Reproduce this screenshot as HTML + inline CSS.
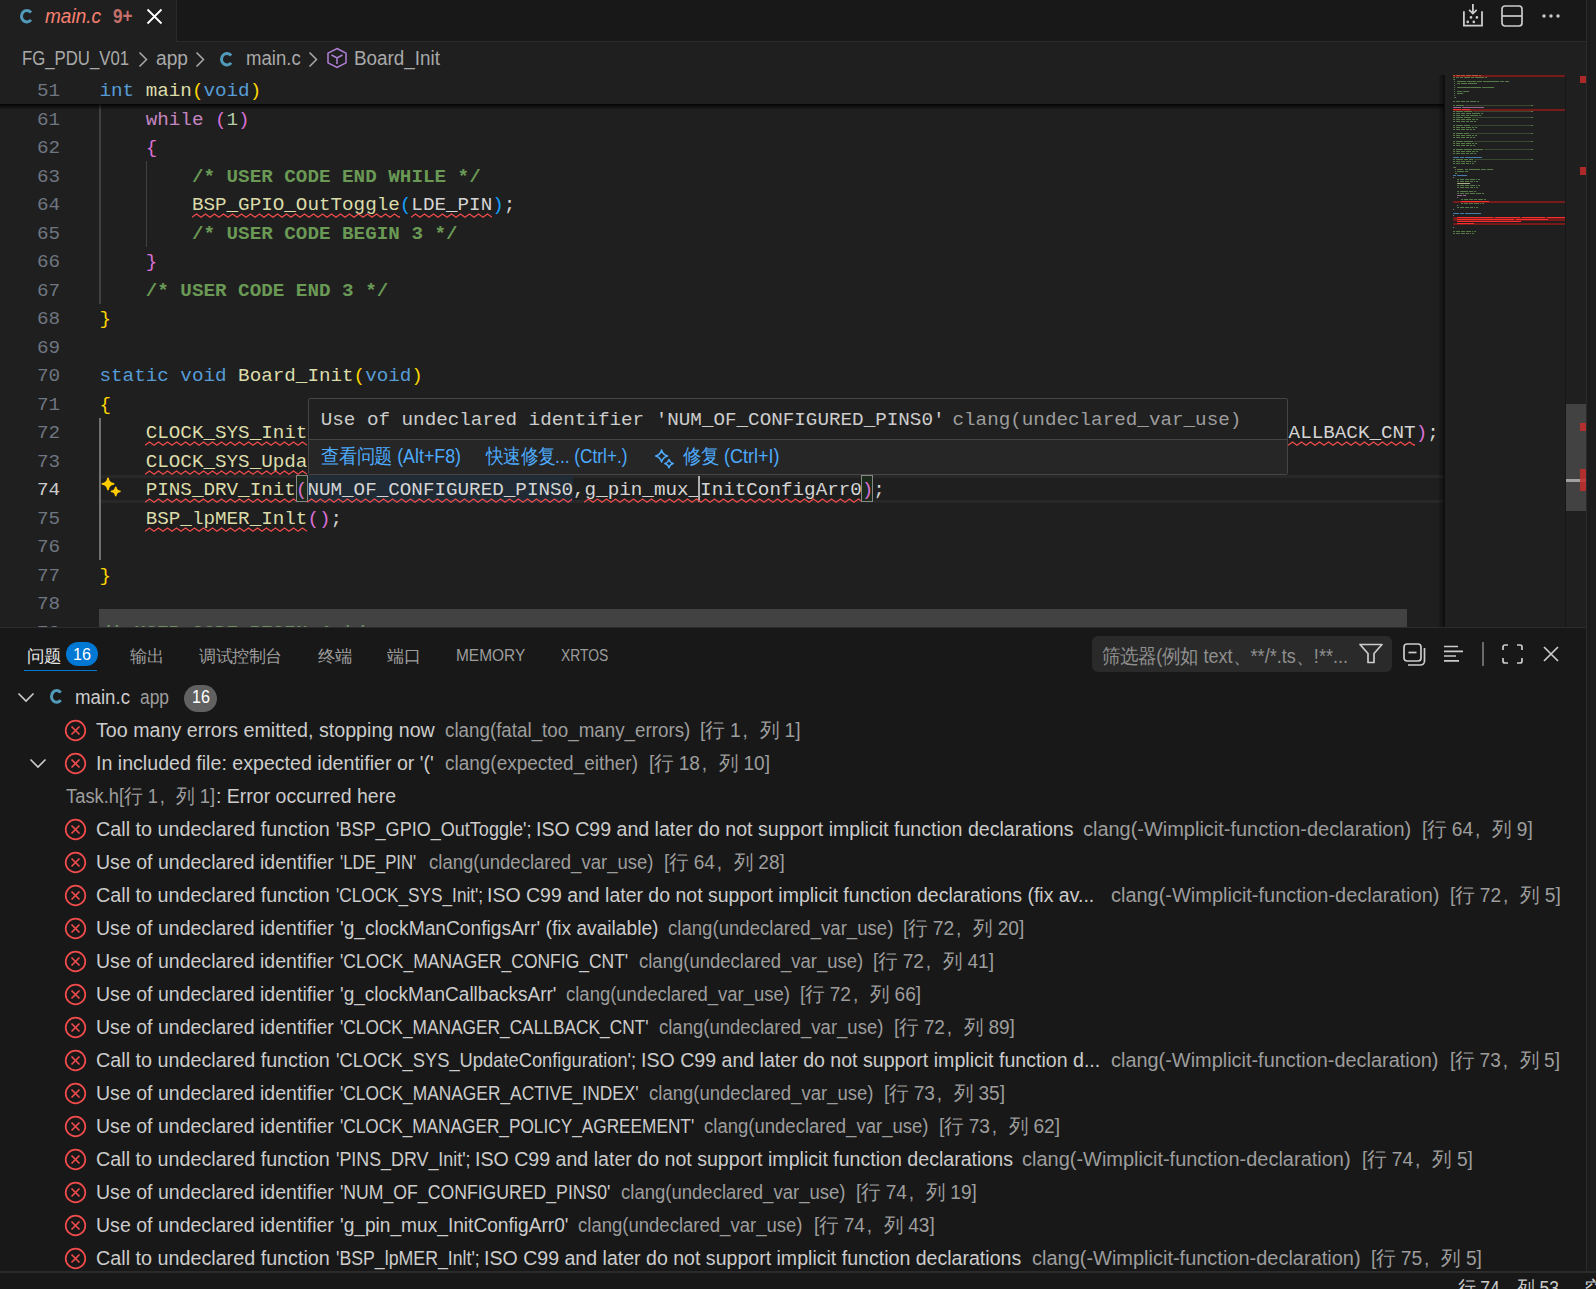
<!DOCTYPE html><html><head><meta charset="utf-8"><style>
*{margin:0;padding:0}
html,body{width:1596px;height:1289px;overflow:hidden;background:#1f1f1f}
.t{position:absolute;white-space:pre;transform-origin:0 50%;}
.b{position:absolute;}
.cj{display:inline-block;width:1em;text-align:center;font-style:normal;}
.cm{text-align:left;padding-left:0.1em;box-sizing:border-box;}
</style></head><body>
<div class="b" style="left:0px;top:0px;width:1586px;height:41px;background:#181818;"></div>
<div class="b" style="left:0px;top:41px;width:1586px;height:1px;background:#2b2b2b;"></div>
<div class="b" style="left:0px;top:0px;width:176px;height:42px;background:#1f1f1f;"></div>
<div class="b" style="left:176px;top:0px;width:1px;height:41px;background:#2b2b2b;"></div>
<svg class="b" style="left:16.1px;top:4.5px" width="20.5" height="22.4" viewBox="16.1 4.5 20.5 22.4"><path d="M31.10 12.04A5.38 5.70 0 1 0 31.10 19.36" stroke="#519aba" stroke-width="3.0" fill="none" stroke-linecap="butt"/></svg>
<span id="f1" class="t" style="left:45.00px;top:3.57px;font-family:'Liberation Sans', sans-serif;font-size:19.5px;line-height:25.35px;color:#f88070;font-style:italic;transform:scaleX(0.9750);">main.c</span>
<span id="f2" class="t" style="left:112.50px;top:3.57px;font-family:'Liberation Sans', sans-serif;font-size:19.5px;line-height:25.35px;color:#c5706a;font-weight:bold;transform:scaleX(0.8770);">9+</span>
<svg class="b" style="left:146px;top:8px" width="17" height="17" viewBox="0 0 17 17"><path d="M1.5 1.5L15.5 15.5M15.5 1.5L1.5 15.5" stroke="#ffffff" stroke-width="1.8" fill="none"/></svg>
<svg class="b" style="left:0;top:0" width="1596" height="40" viewBox="0 0 1596 40" fill="none" stroke="#cccccc" stroke-width="1.8">
<path d="M1463.9 11.3V25.6H1482V11.3"/><path d="M1472.9 4V13.6M1469.1 9.9L1472.9 13.6L1476.7 9.9"/>
<g fill="#cccccc" stroke="none"><circle cx="1471" cy="17.4" r="1.3"/><circle cx="1476.9" cy="17.4" r="1.3"/><circle cx="1467.7" cy="21.9" r="1.3"/><circle cx="1473.8" cy="21.9" r="1.3"/></g></svg>
<svg class="b" style="left:1500px;top:4px" width="24" height="24" viewBox="0 0 24 24" fill="none" stroke="#cccccc" stroke-width="1.7">
<rect x="2" y="2" width="20" height="20" rx="3"/><path d="M2 12h20"/></svg>
<svg class="b" style="left:1540px;top:9px" width="22" height="14" viewBox="0 0 22 14" fill="#cccccc">
<circle cx="4" cy="7" r="1.7"/><circle cx="11" cy="7" r="1.7"/><circle cx="18" cy="7" r="1.7"/></svg>
<span id="f3" class="t" style="left:22.00px;top:46.27px;font-family:'Liberation Sans', sans-serif;font-size:19.5px;line-height:25.35px;color:#a9a9a9;transform:scaleX(0.8585);">FG_PDU_V01</span>
<svg class="b" style="left:138px;top:51px" width="10" height="17" viewBox="0 0 10 17"><path d="M1.5 1.5L8.5 8.5L1.5 15.5" stroke="#a9a9a9" stroke-width="1.5" fill="none"/></svg>
<span id="f4" class="t" style="left:156.00px;top:46.27px;font-family:'Liberation Sans', sans-serif;font-size:19.5px;line-height:25.35px;color:#a9a9a9;transform:scaleX(0.9832);">app</span>
<svg class="b" style="left:195px;top:51px" width="10" height="17" viewBox="0 0 10 17"><path d="M1.5 1.5L8.5 8.5L1.5 15.5" stroke="#a9a9a9" stroke-width="1.5" fill="none"/></svg>
<svg class="b" style="left:215.9px;top:47.7px" width="20.69999999999999" height="22.39999999999999" viewBox="215.9 47.7 20.69999999999999 22.39999999999999"><path d="M231.10 55.24A5.49 5.70 0 1 0 231.10 62.56" stroke="#519aba" stroke-width="3.0" fill="none" stroke-linecap="butt"/></svg>
<span id="f5" class="t" style="left:246.00px;top:46.27px;font-family:'Liberation Sans', sans-serif;font-size:19.5px;line-height:25.35px;color:#a9a9a9;transform:scaleX(0.9523);">main.c</span>
<svg class="b" style="left:308px;top:51px" width="10" height="17" viewBox="0 0 10 17"><path d="M1.5 1.5L8.5 8.5L1.5 15.5" stroke="#a9a9a9" stroke-width="1.5" fill="none"/></svg>
<svg class="b" style="left:326px;top:47px" width="22" height="22" viewBox="0 0 22 22" fill="none" stroke="#b180d7" stroke-width="1.5">
<path d="M11 1.5L20 6.2V15.8L11 20.5L2 15.8V6.2Z"/><path d="M5.5 8L11 11L16.5 8M11 11V17"/></svg>
<span id="f6" class="t" style="left:354.40px;top:46.27px;font-family:'Liberation Sans', sans-serif;font-size:19.5px;line-height:25.35px;color:#a9a9a9;transform:scaleX(0.9673);">Board_Init</span>
<div class="b" style="left:101px;top:474.95px;width:1343px;height:3px;background:#282828;"></div>
<div class="b" style="left:101px;top:500.05px;width:1343px;height:3px;background:#282828;"></div>
<div class="b" style="left:99px;top:104.25px;width:1.5px;height:199.5px;background:#404040;"></div>
<div class="b" style="left:145.5px;top:161.25px;width:1.5px;height:85.5px;background:#404040;"></div>
<div class="b" style="left:99px;top:417.75px;width:1.5px;height:142.5px;background:#707070;"></div>
<span id="f7" class="t" style="left:36.90px;top:107.61px;font-family:'Liberation Mono', monospace;font-size:19.25px;line-height:25.03px;color:#6e7681;">61</span>
<span id="f8" class="t" style="left:36.90px;top:136.11px;font-family:'Liberation Mono', monospace;font-size:19.25px;line-height:25.03px;color:#6e7681;">62</span>
<span id="f9" class="t" style="left:36.90px;top:164.61px;font-family:'Liberation Mono', monospace;font-size:19.25px;line-height:25.03px;color:#6e7681;">63</span>
<span id="f10" class="t" style="left:36.90px;top:193.11px;font-family:'Liberation Mono', monospace;font-size:19.25px;line-height:25.03px;color:#6e7681;">64</span>
<span id="f11" class="t" style="left:36.90px;top:221.61px;font-family:'Liberation Mono', monospace;font-size:19.25px;line-height:25.03px;color:#6e7681;">65</span>
<span id="f12" class="t" style="left:36.90px;top:250.11px;font-family:'Liberation Mono', monospace;font-size:19.25px;line-height:25.03px;color:#6e7681;">66</span>
<span id="f13" class="t" style="left:36.90px;top:278.61px;font-family:'Liberation Mono', monospace;font-size:19.25px;line-height:25.03px;color:#6e7681;">67</span>
<span id="f14" class="t" style="left:36.90px;top:307.11px;font-family:'Liberation Mono', monospace;font-size:19.25px;line-height:25.03px;color:#6e7681;">68</span>
<span id="f15" class="t" style="left:36.90px;top:335.61px;font-family:'Liberation Mono', monospace;font-size:19.25px;line-height:25.03px;color:#6e7681;">69</span>
<span id="f16" class="t" style="left:36.90px;top:364.11px;font-family:'Liberation Mono', monospace;font-size:19.25px;line-height:25.03px;color:#6e7681;">70</span>
<span id="f17" class="t" style="left:36.90px;top:392.61px;font-family:'Liberation Mono', monospace;font-size:19.25px;line-height:25.03px;color:#6e7681;">71</span>
<span id="f18" class="t" style="left:36.90px;top:421.11px;font-family:'Liberation Mono', monospace;font-size:19.25px;line-height:25.03px;color:#6e7681;">72</span>
<span id="f19" class="t" style="left:36.90px;top:449.61px;font-family:'Liberation Mono', monospace;font-size:19.25px;line-height:25.03px;color:#6e7681;">73</span>
<span id="f20" class="t" style="left:36.90px;top:478.11px;font-family:'Liberation Mono', monospace;font-size:19.25px;line-height:25.03px;color:#cccccc;">74</span>
<span id="f21" class="t" style="left:36.90px;top:506.61px;font-family:'Liberation Mono', monospace;font-size:19.25px;line-height:25.03px;color:#6e7681;">75</span>
<span id="f22" class="t" style="left:36.90px;top:535.11px;font-family:'Liberation Mono', monospace;font-size:19.25px;line-height:25.03px;color:#6e7681;">76</span>
<span id="f23" class="t" style="left:36.90px;top:563.61px;font-family:'Liberation Mono', monospace;font-size:19.25px;line-height:25.03px;color:#6e7681;">77</span>
<span id="f24" class="t" style="left:36.90px;top:592.11px;font-family:'Liberation Mono', monospace;font-size:19.25px;line-height:25.03px;color:#6e7681;">78</span>
<span id="f25" class="t" style="left:36.90px;top:620.61px;font-family:'Liberation Mono', monospace;font-size:19.25px;line-height:25.03px;color:#6e7681;">79</span>
<span id="f26" class="t" style="left:145.70px;top:107.61px;font-family:'Liberation Mono', monospace;font-size:19.25px;line-height:25.03px;color:#c586c0;">while</span>
<span id="f27" class="t" style="left:215.00px;top:107.61px;font-family:'Liberation Mono', monospace;font-size:19.25px;line-height:25.03px;color:#da70d6;">(</span>
<span id="f28" class="t" style="left:226.55px;top:107.61px;font-family:'Liberation Mono', monospace;font-size:19.25px;line-height:25.03px;color:#b5cea8;">1</span>
<span id="f29" class="t" style="left:238.10px;top:107.61px;font-family:'Liberation Mono', monospace;font-size:19.25px;line-height:25.03px;color:#da70d6;">)</span>
<span id="f30" class="t" style="left:145.70px;top:136.11px;font-family:'Liberation Mono', monospace;font-size:19.25px;line-height:25.03px;color:#da70d6;">{</span>
<span id="f31" class="t" style="left:191.90px;top:164.61px;font-family:'Liberation Mono', monospace;font-size:19.25px;line-height:25.03px;color:#6a9955;font-weight:bold;">/* USER CODE END WHILE */</span>
<span id="f32" class="t" style="left:191.90px;top:193.11px;font-family:'Liberation Mono', monospace;font-size:19.25px;line-height:25.03px;color:#dcdcaa;">BSP_GPIO_OutToggle</span>
<span id="f33" class="t" style="left:399.80px;top:193.11px;font-family:'Liberation Mono', monospace;font-size:19.25px;line-height:25.03px;color:#179fff;">(</span>
<span id="f34" class="t" style="left:411.35px;top:193.11px;font-family:'Liberation Mono', monospace;font-size:19.25px;line-height:25.03px;color:#d4d4d4;">LDE_PIN</span>
<span id="f35" class="t" style="left:492.20px;top:193.11px;font-family:'Liberation Mono', monospace;font-size:19.25px;line-height:25.03px;color:#179fff;">)</span>
<span id="f36" class="t" style="left:503.75px;top:193.11px;font-family:'Liberation Mono', monospace;font-size:19.25px;line-height:25.03px;color:#d4d4d4;">;</span>
<span id="f37" class="t" style="left:191.90px;top:221.61px;font-family:'Liberation Mono', monospace;font-size:19.25px;line-height:25.03px;color:#6a9955;font-weight:bold;">/* USER CODE BEGIN 3 */</span>
<span id="f38" class="t" style="left:145.70px;top:250.11px;font-family:'Liberation Mono', monospace;font-size:19.25px;line-height:25.03px;color:#da70d6;">}</span>
<span id="f39" class="t" style="left:145.70px;top:278.61px;font-family:'Liberation Mono', monospace;font-size:19.25px;line-height:25.03px;color:#6a9955;font-weight:bold;">/* USER CODE END 3 */</span>
<span id="f40" class="t" style="left:99.50px;top:307.11px;font-family:'Liberation Mono', monospace;font-size:19.25px;line-height:25.03px;color:#ffd700;">}</span>
<span id="f41" class="t" style="left:99.50px;top:364.11px;font-family:'Liberation Mono', monospace;font-size:19.25px;line-height:25.03px;color:#569cd6;">static</span>
<span id="f42" class="t" style="left:180.35px;top:364.11px;font-family:'Liberation Mono', monospace;font-size:19.25px;line-height:25.03px;color:#569cd6;">void</span>
<span id="f43" class="t" style="left:238.10px;top:364.11px;font-family:'Liberation Mono', monospace;font-size:19.25px;line-height:25.03px;color:#dcdcaa;">Board_Init</span>
<span id="f44" class="t" style="left:353.60px;top:364.11px;font-family:'Liberation Mono', monospace;font-size:19.25px;line-height:25.03px;color:#ffd700;">(</span>
<span id="f45" class="t" style="left:365.15px;top:364.11px;font-family:'Liberation Mono', monospace;font-size:19.25px;line-height:25.03px;color:#569cd6;">void</span>
<span id="f46" class="t" style="left:411.35px;top:364.11px;font-family:'Liberation Mono', monospace;font-size:19.25px;line-height:25.03px;color:#ffd700;">)</span>
<span id="f47" class="t" style="left:99.50px;top:392.61px;font-family:'Liberation Mono', monospace;font-size:19.25px;line-height:25.03px;color:#ffd700;">{</span>
<span id="f48" class="t" style="left:145.70px;top:421.11px;font-family:'Liberation Mono', monospace;font-size:19.25px;line-height:25.03px;color:#dcdcaa;">CLOCK_SYS_Init</span>
<span id="f49" class="t" style="left:145.70px;top:449.61px;font-family:'Liberation Mono', monospace;font-size:19.25px;line-height:25.03px;color:#dcdcaa;">CLOCK_SYS_Upda</span>
<div class="b" style="left:307px;top:475.25px;width:265.5px;height:27.5px;background:#202b36;"></div>
<div class="b" style="left:296px;top:475.25px;width:12px;height:27.0px;background:#1c2a1c;outline:1px solid #888888;outline-offset:-1px;"></div>
<div class="b" style="left:861px;top:475.25px;width:12px;height:27.0px;background:#1c2a1c;outline:1px solid #888888;outline-offset:-1px;"></div>
<span id="f50" class="t" style="left:145.70px;top:478.11px;font-family:'Liberation Mono', monospace;font-size:19.25px;line-height:25.03px;color:#dcdcaa;">PINS_DRV_Init</span>
<span id="f51" class="t" style="left:295.85px;top:478.11px;font-family:'Liberation Mono', monospace;font-size:19.25px;line-height:25.03px;color:#da70d6;">(</span>
<span id="f52" class="t" style="left:307.40px;top:478.11px;font-family:'Liberation Mono', monospace;font-size:19.25px;line-height:25.03px;color:#d4d4d4;">NUM_OF_CONFIGURED_PINS0</span>
<span id="f53" class="t" style="left:573.05px;top:478.11px;font-family:'Liberation Mono', monospace;font-size:19.25px;line-height:25.03px;color:#d4d4d4;">,</span>
<span id="f54" class="t" style="left:584.60px;top:478.11px;font-family:'Liberation Mono', monospace;font-size:19.25px;line-height:25.03px;color:#d4d4d4;">g_pin_mux_InitConfigArr0</span>
<span id="f55" class="t" style="left:861.80px;top:478.11px;font-family:'Liberation Mono', monospace;font-size:19.25px;line-height:25.03px;color:#da70d6;">)</span>
<span id="f56" class="t" style="left:873.35px;top:478.11px;font-family:'Liberation Mono', monospace;font-size:19.25px;line-height:25.03px;color:#d4d4d4;">;</span>
<span id="f57" class="t" style="left:145.70px;top:506.61px;font-family:'Liberation Mono', monospace;font-size:19.25px;line-height:25.03px;color:#dcdcaa;">BSP_lpMER_Inlt</span>
<span id="f58" class="t" style="left:307.40px;top:506.61px;font-family:'Liberation Mono', monospace;font-size:19.25px;line-height:25.03px;color:#da70d6;">(</span>
<span id="f59" class="t" style="left:318.95px;top:506.61px;font-family:'Liberation Mono', monospace;font-size:19.25px;line-height:25.03px;color:#da70d6;">)</span>
<span id="f60" class="t" style="left:330.50px;top:506.61px;font-family:'Liberation Mono', monospace;font-size:19.25px;line-height:25.03px;color:#d4d4d4;">;</span>
<span id="f61" class="t" style="left:99.50px;top:563.61px;font-family:'Liberation Mono', monospace;font-size:19.25px;line-height:25.03px;color:#ffd700;">}</span>
<span id="f62" class="t" style="left:99.50px;top:620.61px;font-family:'Liberation Mono', monospace;font-size:19.25px;line-height:25.03px;color:#6a9955;font-weight:bold;">/* USER CODE BEGIN 4 */</span>
<span id="f63" class="t" style="left:1288.60px;top:421.11px;font-family:'Liberation Mono', monospace;font-size:19.25px;line-height:25.03px;color:#d4d4d4;">ALLBACK_CNT</span>
<span id="f64" class="t" style="left:1415.65px;top:421.11px;font-family:'Liberation Mono', monospace;font-size:19.25px;line-height:25.03px;color:#da70d6;">)</span>
<span id="f65" class="t" style="left:1427.20px;top:421.11px;font-family:'Liberation Mono', monospace;font-size:19.25px;line-height:25.03px;color:#d4d4d4;">;</span>
<div class="b" style="left:698px;top:475.75px;width:2px;height:26.5px;background:#aeafad;"></div>
<svg class="b" style="left:192px;top:213.25px;overflow:hidden" width="208" height="5" viewBox="0 0 208 5"><path d="M0 4.2L4.50 1.0L9.00 4.2L13.50 1.0L18.00 4.2L22.50 1.0L27.00 4.2L31.50 1.0L36.00 4.2L40.50 1.0L45.00 4.2L49.50 1.0L54.00 4.2L58.50 1.0L63.00 4.2L67.50 1.0L72.00 4.2L76.50 1.0L81.00 4.2L85.50 1.0L90.00 4.2L94.50 1.0L99.00 4.2L103.50 1.0L108.00 4.2L112.50 1.0L117.00 4.2L121.50 1.0L126.00 4.2L130.50 1.0L135.00 4.2L139.50 1.0L144.00 4.2L148.50 1.0L153.00 4.2L157.50 1.0L162.00 4.2L166.50 1.0L171.00 4.2L175.50 1.0L180.00 4.2L184.50 1.0L189.00 4.2L193.50 1.0L198.00 4.2L202.50 1.0L207.00 4.2L211.50 1.0" stroke="#f14c4c" stroke-width="1.3" fill="none"/></svg>
<svg class="b" style="left:411px;top:213.25px;overflow:hidden" width="81" height="5" viewBox="0 0 81 5"><path d="M0 4.2L4.50 1.0L9.00 4.2L13.50 1.0L18.00 4.2L22.50 1.0L27.00 4.2L31.50 1.0L36.00 4.2L40.50 1.0L45.00 4.2L49.50 1.0L54.00 4.2L58.50 1.0L63.00 4.2L67.50 1.0L72.00 4.2L76.50 1.0L81.00 4.2" stroke="#f14c4c" stroke-width="1.3" fill="none"/></svg>
<svg class="b" style="left:145px;top:441.25px;overflow:hidden" width="162" height="5" viewBox="0 0 162 5"><path d="M0 4.2L4.50 1.0L9.00 4.2L13.50 1.0L18.00 4.2L22.50 1.0L27.00 4.2L31.50 1.0L36.00 4.2L40.50 1.0L45.00 4.2L49.50 1.0L54.00 4.2L58.50 1.0L63.00 4.2L67.50 1.0L72.00 4.2L76.50 1.0L81.00 4.2L85.50 1.0L90.00 4.2L94.50 1.0L99.00 4.2L103.50 1.0L108.00 4.2L112.50 1.0L117.00 4.2L121.50 1.0L126.00 4.2L130.50 1.0L135.00 4.2L139.50 1.0L144.00 4.2L148.50 1.0L153.00 4.2L157.50 1.0L162.00 4.2" stroke="#f14c4c" stroke-width="1.3" fill="none"/></svg>
<svg class="b" style="left:1288px;top:441.25px;overflow:hidden" width="127" height="5" viewBox="0 0 127 5"><path d="M0 4.2L4.50 1.0L9.00 4.2L13.50 1.0L18.00 4.2L22.50 1.0L27.00 4.2L31.50 1.0L36.00 4.2L40.50 1.0L45.00 4.2L49.50 1.0L54.00 4.2L58.50 1.0L63.00 4.2L67.50 1.0L72.00 4.2L76.50 1.0L81.00 4.2L85.50 1.0L90.00 4.2L94.50 1.0L99.00 4.2L103.50 1.0L108.00 4.2L112.50 1.0L117.00 4.2L121.50 1.0L126.00 4.2L130.50 1.0" stroke="#f14c4c" stroke-width="1.3" fill="none"/></svg>
<svg class="b" style="left:145px;top:469.75px;overflow:hidden" width="162" height="5" viewBox="0 0 162 5"><path d="M0 4.2L4.50 1.0L9.00 4.2L13.50 1.0L18.00 4.2L22.50 1.0L27.00 4.2L31.50 1.0L36.00 4.2L40.50 1.0L45.00 4.2L49.50 1.0L54.00 4.2L58.50 1.0L63.00 4.2L67.50 1.0L72.00 4.2L76.50 1.0L81.00 4.2L85.50 1.0L90.00 4.2L94.50 1.0L99.00 4.2L103.50 1.0L108.00 4.2L112.50 1.0L117.00 4.2L121.50 1.0L126.00 4.2L130.50 1.0L135.00 4.2L139.50 1.0L144.00 4.2L148.50 1.0L153.00 4.2L157.50 1.0L162.00 4.2" stroke="#f14c4c" stroke-width="1.3" fill="none"/></svg>
<svg class="b" style="left:145px;top:498.25px;overflow:hidden" width="151" height="5" viewBox="0 0 151 5"><path d="M0 4.2L4.50 1.0L9.00 4.2L13.50 1.0L18.00 4.2L22.50 1.0L27.00 4.2L31.50 1.0L36.00 4.2L40.50 1.0L45.00 4.2L49.50 1.0L54.00 4.2L58.50 1.0L63.00 4.2L67.50 1.0L72.00 4.2L76.50 1.0L81.00 4.2L85.50 1.0L90.00 4.2L94.50 1.0L99.00 4.2L103.50 1.0L108.00 4.2L112.50 1.0L117.00 4.2L121.50 1.0L126.00 4.2L130.50 1.0L135.00 4.2L139.50 1.0L144.00 4.2L148.50 1.0L153.00 4.2" stroke="#f14c4c" stroke-width="1.3" fill="none"/></svg>
<svg class="b" style="left:307px;top:498.25px;overflow:hidden" width="265" height="5" viewBox="0 0 265 5"><path d="M0 4.2L4.50 1.0L9.00 4.2L13.50 1.0L18.00 4.2L22.50 1.0L27.00 4.2L31.50 1.0L36.00 4.2L40.50 1.0L45.00 4.2L49.50 1.0L54.00 4.2L58.50 1.0L63.00 4.2L67.50 1.0L72.00 4.2L76.50 1.0L81.00 4.2L85.50 1.0L90.00 4.2L94.50 1.0L99.00 4.2L103.50 1.0L108.00 4.2L112.50 1.0L117.00 4.2L121.50 1.0L126.00 4.2L130.50 1.0L135.00 4.2L139.50 1.0L144.00 4.2L148.50 1.0L153.00 4.2L157.50 1.0L162.00 4.2L166.50 1.0L171.00 4.2L175.50 1.0L180.00 4.2L184.50 1.0L189.00 4.2L193.50 1.0L198.00 4.2L202.50 1.0L207.00 4.2L211.50 1.0L216.00 4.2L220.50 1.0L225.00 4.2L229.50 1.0L234.00 4.2L238.50 1.0L243.00 4.2L247.50 1.0L252.00 4.2L256.50 1.0L261.00 4.2L265.50 1.0" stroke="#f14c4c" stroke-width="1.3" fill="none"/></svg>
<svg class="b" style="left:584px;top:498.25px;overflow:hidden" width="277" height="5" viewBox="0 0 277 5"><path d="M0 4.2L4.50 1.0L9.00 4.2L13.50 1.0L18.00 4.2L22.50 1.0L27.00 4.2L31.50 1.0L36.00 4.2L40.50 1.0L45.00 4.2L49.50 1.0L54.00 4.2L58.50 1.0L63.00 4.2L67.50 1.0L72.00 4.2L76.50 1.0L81.00 4.2L85.50 1.0L90.00 4.2L94.50 1.0L99.00 4.2L103.50 1.0L108.00 4.2L112.50 1.0L117.00 4.2L121.50 1.0L126.00 4.2L130.50 1.0L135.00 4.2L139.50 1.0L144.00 4.2L148.50 1.0L153.00 4.2L157.50 1.0L162.00 4.2L166.50 1.0L171.00 4.2L175.50 1.0L180.00 4.2L184.50 1.0L189.00 4.2L193.50 1.0L198.00 4.2L202.50 1.0L207.00 4.2L211.50 1.0L216.00 4.2L220.50 1.0L225.00 4.2L229.50 1.0L234.00 4.2L238.50 1.0L243.00 4.2L247.50 1.0L252.00 4.2L256.50 1.0L261.00 4.2L265.50 1.0L270.00 4.2L274.50 1.0L279.00 4.2" stroke="#f14c4c" stroke-width="1.3" fill="none"/></svg>
<svg class="b" style="left:145px;top:526.75px;overflow:hidden" width="162" height="5" viewBox="0 0 162 5"><path d="M0 4.2L4.50 1.0L9.00 4.2L13.50 1.0L18.00 4.2L22.50 1.0L27.00 4.2L31.50 1.0L36.00 4.2L40.50 1.0L45.00 4.2L49.50 1.0L54.00 4.2L58.50 1.0L63.00 4.2L67.50 1.0L72.00 4.2L76.50 1.0L81.00 4.2L85.50 1.0L90.00 4.2L94.50 1.0L99.00 4.2L103.50 1.0L108.00 4.2L112.50 1.0L117.00 4.2L121.50 1.0L126.00 4.2L130.50 1.0L135.00 4.2L139.50 1.0L144.00 4.2L148.50 1.0L153.00 4.2L157.50 1.0L162.00 4.2" stroke="#f14c4c" stroke-width="1.3" fill="none"/></svg>
<svg class="b" style="left:0;top:440px" width="200" height="80" viewBox="0 440 200 80" fill="#ffcc00" stroke="#ffcc00" stroke-width="1.8" stroke-linejoin="round"><path d="M108 478.29999999999995Q108.67 483.23 113.6 483.9Q108.67 484.57 108 489.5Q107.33 484.57 102.4 483.9Q107.33 483.23 108 478.29999999999995Z"/><path d="M115.75 487.29999999999995Q116.24 490.91 119.85 491.4Q116.24 491.89 115.75 495.5Q115.26 491.89 111.65 491.4Q115.26 490.91 115.75 487.29999999999995Z"/></svg>
<div class="b" style="left:0px;top:75px;width:1444px;height:29.25px;background:#1f1f1f;"></div>
<span id="f66" class="t" style="left:36.90px;top:78.86px;font-family:'Liberation Mono', monospace;font-size:19.25px;line-height:25.03px;color:#6e7681;">51</span>
<span id="f67" class="t" style="left:99.50px;top:78.86px;font-family:'Liberation Mono', monospace;font-size:19.25px;line-height:25.03px;color:#569cd6;">int</span>
<span id="f68" class="t" style="left:145.70px;top:78.86px;font-family:'Liberation Mono', monospace;font-size:19.25px;line-height:25.03px;color:#dcdcaa;">main</span>
<span id="f69" class="t" style="left:191.90px;top:78.86px;font-family:'Liberation Mono', monospace;font-size:19.25px;line-height:25.03px;color:#ffd700;">(</span>
<span id="f70" class="t" style="left:203.45px;top:78.86px;font-family:'Liberation Mono', monospace;font-size:19.25px;line-height:25.03px;color:#569cd6;">void</span>
<span id="f71" class="t" style="left:249.65px;top:78.86px;font-family:'Liberation Mono', monospace;font-size:19.25px;line-height:25.03px;color:#ffd700;">)</span>
<div class="b" style="left:0px;top:104.25px;width:1444px;height:6px;background:linear-gradient(rgba(0,0,0,0.85),rgba(0,0,0,0));"></div>
<div class="b" style="left:99px;top:609px;width:1308px;height:18px;background:rgba(121,121,121,0.4);"></div>
<div class="b" style="left:308px;top:398px;width:980px;height:77px;background:#202020;border:1px solid #454545;box-sizing:border-box;border-radius:2px;"></div>
<div class="b" style="left:309px;top:439px;width:978px;height:35px;background:#262626;border-top:1px solid #454545;box-sizing:border-box;"></div>
<span id="f72" class="t" style="left:320.70px;top:408.16px;font-family:'Liberation Mono', monospace;font-size:19.25px;line-height:25.03px;color:#cccccc;">Use of undeclared identifier 'NUM_OF_CONFIGURED_PINS0'</span>
<span id="f73" class="t" style="left:952.50px;top:408.16px;font-family:'Liberation Mono', monospace;font-size:19.25px;line-height:25.03px;color:#9d9d9d;">clang(undeclared_var_use)</span>
<span id="f74" class="t" style="left:320.70px;top:444.07px;font-family:'Liberation Sans', sans-serif;font-size:19.5px;line-height:25.35px;color:#4daafc;transform:scaleX(0.9132);"><i class="cj">查</i><i class="cj">看</i><i class="cj">问</i><i class="cj">题</i> (Alt+F8)</span>
<span id="f75" class="t" style="left:486.40px;top:444.07px;font-family:'Liberation Sans', sans-serif;font-size:19.5px;line-height:25.35px;color:#4daafc;transform:scaleX(0.8861);"><i class="cj">快</i><i class="cj">速</i><i class="cj">修</i><i class="cj">复</i>... (Ctrl+.)</span>
<svg class="b" style="left:0;top:440px" width="800" height="40" viewBox="0 440 800 40" fill="none" stroke="#4daafc" stroke-width="1.5" stroke-linejoin="round"><path d="M661.6 450.0Q662.80 454.80 667.6 456Q662.80 457.20 661.6 462.0Q660.40 457.20 655.6 456Q660.40 454.80 661.6 450.0Z"/><path d="M669 459.40000000000003Q669.84 462.76 673.2 463.6Q669.84 464.44 669 467.8Q668.16 464.44 664.8 463.6Q668.16 462.76 669 459.40000000000003Z"/></svg>
<span id="f76" class="t" style="left:682.60px;top:444.07px;font-family:'Liberation Sans', sans-serif;font-size:19.5px;line-height:25.35px;color:#4daafc;transform:scaleX(0.9221);"><i class="cj">修</i><i class="cj">复</i> (Ctrl+I)</span>
<svg class="b" style="left:0;top:0" width="1596" height="640"><rect x="1453.1" y="201" width="111.9" height="2" fill="#f11414" opacity="0.43"/><rect x="1453.1" y="75" width="111.9" height="2" fill="#f11414" opacity="0.43"/><rect x="1453.1" y="109" width="111.9" height="2" fill="#f11414" opacity="0.43"/><rect x="1453.1" y="217" width="111.9" height="2" fill="#f11414" opacity="0.43"/><rect x="1453.1" y="219" width="111.9" height="2" fill="#f11414" opacity="0.43"/><rect x="1453.1" y="223" width="111.9" height="2" fill="#f11414" opacity="0.43"/><rect x="1453.1" y="75" width="2.0" height="1" fill="#d06040" opacity="0.80"/><rect x="1456.1" y="75" width="4.0" height="1" fill="#d06040" opacity="0.80"/><rect x="1461.1" y="75" width="4.0" height="1" fill="#d06040" opacity="0.80"/><rect x="1466.1" y="75" width="5.0" height="1" fill="#d06040" opacity="0.80"/><rect x="1472.1" y="75" width="6.0" height="1" fill="#d06040" opacity="0.80"/><rect x="1479.1" y="75" width="2.0" height="1" fill="#d06040" opacity="0.80"/><rect x="1453.1" y="77" width="2.0" height="1" fill="#6a9955" opacity="0.75"/><rect x="1456.1" y="77" width="3.0" height="1" fill="#6a9955" opacity="0.75"/><rect x="1460.1" y="77" width="3.0" height="1" fill="#6a9955" opacity="0.75"/><rect x="1464.1" y="77" width="6.0" height="1" fill="#6a9955" opacity="0.75"/><rect x="1471.1" y="77" width="3.0" height="1" fill="#6a9955" opacity="0.75"/><rect x="1475.1" y="77" width="9.0" height="1" fill="#6a9955" opacity="0.75"/><rect x="1485.1" y="77" width="2.0" height="1" fill="#6a9955" opacity="0.75"/><rect x="1453.1" y="79" width="2.0" height="1" fill="#6a9955" opacity="0.75"/><rect x="1454.1" y="81" width="1.0" height="1" fill="#6a9955" opacity="0.75"/><rect x="1457.1" y="81" width="9.0" height="1" fill="#6a9955" opacity="0.75"/><rect x="1467.1" y="81" width="4.0" height="1" fill="#6a9955" opacity="0.75"/><rect x="1471.1" y="81" width="1.0" height="1" fill="#6a9955" opacity="0.75"/><rect x="1472.1" y="81" width="4.0" height="1" fill="#6a9955" opacity="0.75"/><rect x="1477.1" y="81" width="5.0" height="1" fill="#6a9955" opacity="0.75"/><rect x="1483.1" y="81" width="16.0" height="1" fill="#6a9955" opacity="0.75"/><rect x="1500.1" y="81" width="4.0" height="1" fill="#6a9955" opacity="0.75"/><rect x="1505.1" y="81" width="4.0" height="1" fill="#6a9955" opacity="0.75"/><rect x="1454.1" y="83" width="1.0" height="1" fill="#6a9955" opacity="0.75"/><rect x="1457.1" y="83" width="3.0" height="1" fill="#6a9955" opacity="0.75"/><rect x="1461.1" y="83" width="6.0" height="1" fill="#6a9955" opacity="0.75"/><rect x="1468.1" y="83" width="9.0" height="1" fill="#6a9955" opacity="0.75"/><rect x="1454.1" y="85" width="1.0" height="1" fill="#6a9955" opacity="0.75"/><rect x="1454.1" y="87" width="1.0" height="1" fill="#6a9955" opacity="0.75"/><rect x="1457.1" y="87" width="4.0" height="1" fill="#6a9955" opacity="0.75"/><rect x="1461.1" y="87" width="1.0" height="1" fill="#6a9955" opacity="0.75"/><rect x="1462.1" y="87" width="7.0" height="1" fill="#6a9955" opacity="0.75"/><rect x="1469.1" y="87" width="1.0" height="1" fill="#6a9955" opacity="0.75"/><rect x="1470.1" y="87" width="11.0" height="1" fill="#6a9955" opacity="0.75"/><rect x="1482.1" y="87" width="3.0" height="1" fill="#6a9955" opacity="0.75"/><rect x="1485.1" y="87" width="1.0" height="1" fill="#6a9955" opacity="0.75"/><rect x="1486.1" y="87" width="1.0" height="1" fill="#6a9955" opacity="0.75"/><rect x="1487.1" y="87" width="1.0" height="1" fill="#6a9955" opacity="0.75"/><rect x="1488.1" y="87" width="6.0" height="1" fill="#6a9955" opacity="0.75"/><rect x="1454.1" y="89" width="1.0" height="1" fill="#6a9955" opacity="0.75"/><rect x="1454.1" y="91" width="1.0" height="1" fill="#6a9955" opacity="0.75"/><rect x="1457.1" y="91" width="5.0" height="1" fill="#6a9955" opacity="0.75"/><rect x="1463.1" y="91" width="6.0" height="1" fill="#6a9955" opacity="0.75"/><rect x="1454.1" y="93" width="1.0" height="1" fill="#6a9955" opacity="0.75"/><rect x="1457.1" y="93" width="6.0" height="1" fill="#6a9955" opacity="0.75"/><rect x="1454.1" y="95" width="1.0" height="1" fill="#6a9955" opacity="0.75"/><rect x="1454.1" y="97" width="2.0" height="1" fill="#6a9955" opacity="0.75"/><rect x="1453.1" y="101" width="2.0" height="1" fill="#6a9955" opacity="0.75"/><rect x="1456.1" y="101" width="4.0" height="1" fill="#6a9955" opacity="0.75"/><rect x="1461.1" y="101" width="4.0" height="1" fill="#6a9955" opacity="0.75"/><rect x="1466.1" y="101" width="3.0" height="1" fill="#6a9955" opacity="0.75"/><rect x="1470.1" y="101" width="6.0" height="1" fill="#6a9955" opacity="0.75"/><rect x="1477.1" y="101" width="2.0" height="1" fill="#6a9955" opacity="0.75"/><rect x="1453.1" y="105" width="2.0" height="1" fill="#6a9955" opacity="0.75"/><rect x="1456.1" y="105" width="8.0" height="1" fill="#6a9955" opacity="0.75"/><rect x="1465.1" y="105" width="66.0" height="1" fill="#6a9955" opacity="0.34"/><rect x="1531.1" y="105" width="2.0" height="1" fill="#6a9955" opacity="0.75"/><rect x="1453.1" y="107" width="8.0" height="1" fill="#c586c0" opacity="0.70"/><rect x="1462.1" y="107" width="22.0" height="1" fill="#c586c0" opacity="0.70"/><rect x="1453.1" y="109" width="8.0" height="1" fill="#ff3030" opacity="0.90"/><rect x="1462.1" y="109" width="8.0" height="1" fill="#ff3030" opacity="0.90"/><rect x="1453.1" y="111" width="2.0" height="1" fill="#6a9955" opacity="0.75"/><rect x="1456.1" y="111" width="7.0" height="1" fill="#6a9955" opacity="0.75"/><rect x="1464.1" y="111" width="8.0" height="1" fill="#6a9955" opacity="0.75"/><rect x="1473.1" y="111" width="58.0" height="1" fill="#6a9955" opacity="0.34"/><rect x="1531.1" y="111" width="2.0" height="1" fill="#6a9955" opacity="0.75"/><rect x="1453.1" y="113" width="2.0" height="1" fill="#6a9955" opacity="0.75"/><rect x="1456.1" y="113" width="4.0" height="1" fill="#6a9955" opacity="0.75"/><rect x="1461.1" y="113" width="4.0" height="1" fill="#6a9955" opacity="0.75"/><rect x="1466.1" y="113" width="5.0" height="1" fill="#6a9955" opacity="0.75"/><rect x="1472.1" y="113" width="8.0" height="1" fill="#6a9955" opacity="0.75"/><rect x="1481.1" y="113" width="2.0" height="1" fill="#6a9955" opacity="0.75"/><rect x="1453.1" y="115" width="2.0" height="1" fill="#6a9955" opacity="0.75"/><rect x="1456.1" y="115" width="4.0" height="1" fill="#6a9955" opacity="0.75"/><rect x="1461.1" y="115" width="4.0" height="1" fill="#6a9955" opacity="0.75"/><rect x="1466.1" y="115" width="3.0" height="1" fill="#6a9955" opacity="0.75"/><rect x="1470.1" y="115" width="8.0" height="1" fill="#6a9955" opacity="0.75"/><rect x="1479.1" y="115" width="2.0" height="1" fill="#6a9955" opacity="0.75"/><rect x="1453.1" y="117" width="2.0" height="1" fill="#6a9955" opacity="0.75"/><rect x="1456.1" y="117" width="7.0" height="1" fill="#6a9955" opacity="0.75"/><rect x="1464.1" y="117" width="7.0" height="1" fill="#6a9955" opacity="0.75"/><rect x="1472.1" y="117" width="59.0" height="1" fill="#6a9955" opacity="0.34"/><rect x="1531.1" y="117" width="2.0" height="1" fill="#6a9955" opacity="0.75"/><rect x="1453.1" y="119" width="2.0" height="1" fill="#6a9955" opacity="0.75"/><rect x="1456.1" y="119" width="4.0" height="1" fill="#6a9955" opacity="0.75"/><rect x="1461.1" y="119" width="4.0" height="1" fill="#6a9955" opacity="0.75"/><rect x="1466.1" y="119" width="5.0" height="1" fill="#6a9955" opacity="0.75"/><rect x="1472.1" y="119" width="3.0" height="1" fill="#6a9955" opacity="0.75"/><rect x="1476.1" y="119" width="2.0" height="1" fill="#6a9955" opacity="0.75"/><rect x="1453.1" y="121" width="2.0" height="1" fill="#6a9955" opacity="0.75"/><rect x="1456.1" y="121" width="4.0" height="1" fill="#6a9955" opacity="0.75"/><rect x="1461.1" y="121" width="4.0" height="1" fill="#6a9955" opacity="0.75"/><rect x="1466.1" y="121" width="3.0" height="1" fill="#6a9955" opacity="0.75"/><rect x="1470.1" y="121" width="3.0" height="1" fill="#6a9955" opacity="0.75"/><rect x="1474.1" y="121" width="2.0" height="1" fill="#6a9955" opacity="0.75"/><rect x="1453.1" y="125" width="2.0" height="1" fill="#6a9955" opacity="0.75"/><rect x="1456.1" y="125" width="7.0" height="1" fill="#6a9955" opacity="0.75"/><rect x="1464.1" y="125" width="6.0" height="1" fill="#6a9955" opacity="0.75"/><rect x="1471.1" y="125" width="60.0" height="1" fill="#6a9955" opacity="0.34"/><rect x="1531.1" y="125" width="2.0" height="1" fill="#6a9955" opacity="0.75"/><rect x="1453.1" y="127" width="2.0" height="1" fill="#6a9955" opacity="0.75"/><rect x="1456.1" y="127" width="4.0" height="1" fill="#6a9955" opacity="0.75"/><rect x="1461.1" y="127" width="4.0" height="1" fill="#6a9955" opacity="0.75"/><rect x="1466.1" y="127" width="5.0" height="1" fill="#6a9955" opacity="0.75"/><rect x="1472.1" y="127" width="2.0" height="1" fill="#6a9955" opacity="0.75"/><rect x="1475.1" y="127" width="2.0" height="1" fill="#6a9955" opacity="0.75"/><rect x="1453.1" y="129" width="2.0" height="1" fill="#6a9955" opacity="0.75"/><rect x="1456.1" y="129" width="4.0" height="1" fill="#6a9955" opacity="0.75"/><rect x="1461.1" y="129" width="4.0" height="1" fill="#6a9955" opacity="0.75"/><rect x="1466.1" y="129" width="3.0" height="1" fill="#6a9955" opacity="0.75"/><rect x="1470.1" y="129" width="2.0" height="1" fill="#6a9955" opacity="0.75"/><rect x="1473.1" y="129" width="2.0" height="1" fill="#6a9955" opacity="0.75"/><rect x="1453.1" y="133" width="2.0" height="1" fill="#6a9955" opacity="0.75"/><rect x="1456.1" y="133" width="7.0" height="1" fill="#6a9955" opacity="0.75"/><rect x="1464.1" y="133" width="5.0" height="1" fill="#6a9955" opacity="0.75"/><rect x="1470.1" y="133" width="61.0" height="1" fill="#6a9955" opacity="0.34"/><rect x="1531.1" y="133" width="2.0" height="1" fill="#6a9955" opacity="0.75"/><rect x="1453.1" y="135" width="2.0" height="1" fill="#6a9955" opacity="0.75"/><rect x="1456.1" y="135" width="4.0" height="1" fill="#6a9955" opacity="0.75"/><rect x="1461.1" y="135" width="4.0" height="1" fill="#6a9955" opacity="0.75"/><rect x="1466.1" y="135" width="5.0" height="1" fill="#6a9955" opacity="0.75"/><rect x="1472.1" y="135" width="2.0" height="1" fill="#6a9955" opacity="0.75"/><rect x="1475.1" y="135" width="2.0" height="1" fill="#6a9955" opacity="0.75"/><rect x="1453.1" y="137" width="2.0" height="1" fill="#6a9955" opacity="0.75"/><rect x="1456.1" y="137" width="4.0" height="1" fill="#6a9955" opacity="0.75"/><rect x="1461.1" y="137" width="4.0" height="1" fill="#6a9955" opacity="0.75"/><rect x="1466.1" y="137" width="3.0" height="1" fill="#6a9955" opacity="0.75"/><rect x="1470.1" y="137" width="2.0" height="1" fill="#6a9955" opacity="0.75"/><rect x="1473.1" y="137" width="2.0" height="1" fill="#6a9955" opacity="0.75"/><rect x="1453.1" y="141" width="2.0" height="1" fill="#6a9955" opacity="0.75"/><rect x="1456.1" y="141" width="7.0" height="1" fill="#6a9955" opacity="0.75"/><rect x="1464.1" y="141" width="9.0" height="1" fill="#6a9955" opacity="0.75"/><rect x="1474.1" y="141" width="57.0" height="1" fill="#6a9955" opacity="0.34"/><rect x="1531.1" y="141" width="2.0" height="1" fill="#6a9955" opacity="0.75"/><rect x="1453.1" y="143" width="2.0" height="1" fill="#6a9955" opacity="0.75"/><rect x="1456.1" y="143" width="4.0" height="1" fill="#6a9955" opacity="0.75"/><rect x="1461.1" y="143" width="4.0" height="1" fill="#6a9955" opacity="0.75"/><rect x="1466.1" y="143" width="5.0" height="1" fill="#6a9955" opacity="0.75"/><rect x="1472.1" y="143" width="2.0" height="1" fill="#6a9955" opacity="0.75"/><rect x="1475.1" y="143" width="2.0" height="1" fill="#6a9955" opacity="0.75"/><rect x="1453.1" y="145" width="2.0" height="1" fill="#6a9955" opacity="0.75"/><rect x="1456.1" y="145" width="4.0" height="1" fill="#6a9955" opacity="0.75"/><rect x="1461.1" y="145" width="4.0" height="1" fill="#6a9955" opacity="0.75"/><rect x="1466.1" y="145" width="3.0" height="1" fill="#6a9955" opacity="0.75"/><rect x="1470.1" y="145" width="2.0" height="1" fill="#6a9955" opacity="0.75"/><rect x="1473.1" y="145" width="2.0" height="1" fill="#6a9955" opacity="0.75"/><rect x="1453.1" y="149" width="2.0" height="1" fill="#6a9955" opacity="0.75"/><rect x="1456.1" y="149" width="7.0" height="1" fill="#6a9955" opacity="0.75"/><rect x="1464.1" y="149" width="8.0" height="1" fill="#6a9955" opacity="0.75"/><rect x="1473.1" y="149" width="10.0" height="1" fill="#6a9955" opacity="0.75"/><rect x="1484.1" y="149" width="47.0" height="1" fill="#6a9955" opacity="0.34"/><rect x="1531.1" y="149" width="2.0" height="1" fill="#6a9955" opacity="0.75"/><rect x="1453.1" y="151" width="2.0" height="1" fill="#6a9955" opacity="0.75"/><rect x="1456.1" y="151" width="4.0" height="1" fill="#6a9955" opacity="0.75"/><rect x="1461.1" y="151" width="4.0" height="1" fill="#6a9955" opacity="0.75"/><rect x="1466.1" y="151" width="5.0" height="1" fill="#6a9955" opacity="0.75"/><rect x="1472.1" y="151" width="3.0" height="1" fill="#6a9955" opacity="0.75"/><rect x="1476.1" y="151" width="2.0" height="1" fill="#6a9955" opacity="0.75"/><rect x="1453.1" y="153" width="2.0" height="1" fill="#6a9955" opacity="0.75"/><rect x="1456.1" y="153" width="4.0" height="1" fill="#6a9955" opacity="0.75"/><rect x="1461.1" y="153" width="4.0" height="1" fill="#6a9955" opacity="0.75"/><rect x="1466.1" y="153" width="3.0" height="1" fill="#6a9955" opacity="0.75"/><rect x="1470.1" y="153" width="3.0" height="1" fill="#6a9955" opacity="0.75"/><rect x="1474.1" y="153" width="2.0" height="1" fill="#6a9955" opacity="0.75"/><rect x="1453.1" y="157" width="6.0" height="1" fill="#569cd6" opacity="0.75"/><rect x="1460.1" y="157" width="4.0" height="1" fill="#569cd6" opacity="0.75"/><rect x="1465.1" y="157" width="17.0" height="1" fill="#569cd6" opacity="0.75"/><rect x="1453.1" y="159" width="2.0" height="1" fill="#6a9955" opacity="0.75"/><rect x="1456.1" y="159" width="7.0" height="1" fill="#6a9955" opacity="0.75"/><rect x="1464.1" y="159" width="4.0" height="1" fill="#6a9955" opacity="0.75"/><rect x="1469.1" y="159" width="4.0" height="1" fill="#6a9955" opacity="0.75"/><rect x="1474.1" y="159" width="57.0" height="1" fill="#6a9955" opacity="0.34"/><rect x="1531.1" y="159" width="2.0" height="1" fill="#6a9955" opacity="0.75"/><rect x="1453.1" y="161" width="2.0" height="1" fill="#6a9955" opacity="0.75"/><rect x="1456.1" y="161" width="4.0" height="1" fill="#6a9955" opacity="0.75"/><rect x="1461.1" y="161" width="4.0" height="1" fill="#6a9955" opacity="0.75"/><rect x="1466.1" y="161" width="5.0" height="1" fill="#6a9955" opacity="0.75"/><rect x="1472.1" y="161" width="1.0" height="1" fill="#6a9955" opacity="0.75"/><rect x="1474.1" y="161" width="2.0" height="1" fill="#6a9955" opacity="0.75"/><rect x="1453.1" y="163" width="2.0" height="1" fill="#6a9955" opacity="0.75"/><rect x="1456.1" y="163" width="4.0" height="1" fill="#6a9955" opacity="0.75"/><rect x="1461.1" y="163" width="4.0" height="1" fill="#6a9955" opacity="0.75"/><rect x="1466.1" y="163" width="3.0" height="1" fill="#6a9955" opacity="0.75"/><rect x="1470.1" y="163" width="1.0" height="1" fill="#6a9955" opacity="0.75"/><rect x="1472.1" y="163" width="2.0" height="1" fill="#6a9955" opacity="0.75"/><rect x="1453.1" y="167" width="3.0" height="1" fill="#6a9955" opacity="0.75"/><rect x="1455.1" y="169" width="1.0" height="1" fill="#6a9955" opacity="0.75"/><rect x="1457.1" y="169" width="6.0" height="1" fill="#6a9955" opacity="0.75"/><rect x="1465.1" y="169" width="3.0" height="1" fill="#6a9955" opacity="0.75"/><rect x="1469.1" y="169" width="11.0" height="1" fill="#6a9955" opacity="0.75"/><rect x="1481.1" y="169" width="5.0" height="1" fill="#6a9955" opacity="0.75"/><rect x="1487.1" y="169" width="6.0" height="1" fill="#6a9955" opacity="0.75"/><rect x="1455.1" y="171" width="1.0" height="1" fill="#6a9955" opacity="0.75"/><rect x="1457.1" y="171" width="7.0" height="1" fill="#6a9955" opacity="0.75"/><rect x="1465.1" y="171" width="3.0" height="1" fill="#6a9955" opacity="0.75"/><rect x="1455.1" y="173" width="2.0" height="1" fill="#6a9955" opacity="0.75"/><rect x="1453.1" y="175" width="3.0" height="1" fill="#569cd6" opacity="0.75"/><rect x="1457.1" y="175" width="10.0" height="1" fill="#569cd6" opacity="0.75"/><rect x="1453.1" y="177" width="1.0" height="1" fill="#c8c8c8" opacity="0.60"/><rect x="1457.1" y="179" width="2.0" height="1" fill="#6a9955" opacity="0.75"/><rect x="1460.1" y="179" width="4.0" height="1" fill="#6a9955" opacity="0.75"/><rect x="1465.1" y="179" width="4.0" height="1" fill="#6a9955" opacity="0.75"/><rect x="1470.1" y="179" width="5.0" height="1" fill="#6a9955" opacity="0.75"/><rect x="1476.1" y="179" width="1.0" height="1" fill="#6a9955" opacity="0.75"/><rect x="1478.1" y="179" width="2.0" height="1" fill="#6a9955" opacity="0.75"/><rect x="1457.1" y="181" width="2.0" height="1" fill="#6a9955" opacity="0.75"/><rect x="1460.1" y="181" width="4.0" height="1" fill="#6a9955" opacity="0.75"/><rect x="1465.1" y="181" width="4.0" height="1" fill="#6a9955" opacity="0.75"/><rect x="1470.1" y="181" width="3.0" height="1" fill="#6a9955" opacity="0.75"/><rect x="1474.1" y="181" width="1.0" height="1" fill="#6a9955" opacity="0.75"/><rect x="1476.1" y="181" width="2.0" height="1" fill="#6a9955" opacity="0.75"/><rect x="1457.1" y="183" width="13.0" height="1" fill="#dcdcaa" opacity="0.75"/><rect x="1457.1" y="185" width="2.0" height="1" fill="#6a9955" opacity="0.75"/><rect x="1460.1" y="185" width="4.0" height="1" fill="#6a9955" opacity="0.75"/><rect x="1465.1" y="185" width="4.0" height="1" fill="#6a9955" opacity="0.75"/><rect x="1470.1" y="185" width="5.0" height="1" fill="#6a9955" opacity="0.75"/><rect x="1476.1" y="185" width="1.0" height="1" fill="#6a9955" opacity="0.75"/><rect x="1478.1" y="185" width="2.0" height="1" fill="#6a9955" opacity="0.75"/><rect x="1457.1" y="187" width="2.0" height="1" fill="#6a9955" opacity="0.75"/><rect x="1460.1" y="187" width="4.0" height="1" fill="#6a9955" opacity="0.75"/><rect x="1465.1" y="187" width="4.0" height="1" fill="#6a9955" opacity="0.75"/><rect x="1470.1" y="187" width="3.0" height="1" fill="#6a9955" opacity="0.75"/><rect x="1474.1" y="187" width="1.0" height="1" fill="#6a9955" opacity="0.75"/><rect x="1476.1" y="187" width="2.0" height="1" fill="#6a9955" opacity="0.75"/><rect x="1457.1" y="191" width="2.0" height="1" fill="#6a9955" opacity="0.75"/><rect x="1460.1" y="191" width="8.0" height="1" fill="#6a9955" opacity="0.75"/><rect x="1469.1" y="191" width="4.0" height="1" fill="#6a9955" opacity="0.75"/><rect x="1474.1" y="191" width="2.0" height="1" fill="#6a9955" opacity="0.75"/><rect x="1457.1" y="193" width="2.0" height="1" fill="#6a9955" opacity="0.75"/><rect x="1460.1" y="193" width="4.0" height="1" fill="#6a9955" opacity="0.75"/><rect x="1465.1" y="193" width="4.0" height="1" fill="#6a9955" opacity="0.75"/><rect x="1470.1" y="193" width="5.0" height="1" fill="#6a9955" opacity="0.75"/><rect x="1476.1" y="193" width="5.0" height="1" fill="#6a9955" opacity="0.75"/><rect x="1482.1" y="193" width="2.0" height="1" fill="#6a9955" opacity="0.75"/><rect x="1457.1" y="195" width="5.0" height="1" fill="#c586c0" opacity="0.75"/><rect x="1463.1" y="195" width="3.0" height="1" fill="#c586c0" opacity="0.75"/><rect x="1457.1" y="197" width="1.0" height="1" fill="#c8c8c8" opacity="0.60"/><rect x="1461.1" y="199" width="2.0" height="1" fill="#6a9955" opacity="0.75"/><rect x="1464.1" y="199" width="4.0" height="1" fill="#6a9955" opacity="0.75"/><rect x="1469.1" y="199" width="4.0" height="1" fill="#6a9955" opacity="0.75"/><rect x="1474.1" y="199" width="3.0" height="1" fill="#6a9955" opacity="0.75"/><rect x="1478.1" y="199" width="5.0" height="1" fill="#6a9955" opacity="0.75"/><rect x="1484.1" y="199" width="2.0" height="1" fill="#6a9955" opacity="0.75"/><rect x="1461.1" y="201" width="28.0" height="1" fill="#ff3030" opacity="0.95"/><rect x="1461.1" y="203" width="2.0" height="1" fill="#6a9955" opacity="0.75"/><rect x="1464.1" y="203" width="4.0" height="1" fill="#6a9955" opacity="0.75"/><rect x="1469.1" y="203" width="4.0" height="1" fill="#6a9955" opacity="0.75"/><rect x="1474.1" y="203" width="5.0" height="1" fill="#6a9955" opacity="0.75"/><rect x="1480.1" y="203" width="1.0" height="1" fill="#6a9955" opacity="0.75"/><rect x="1482.1" y="203" width="2.0" height="1" fill="#6a9955" opacity="0.75"/><rect x="1457.1" y="205" width="1.0" height="1" fill="#c8c8c8" opacity="0.60"/><rect x="1457.1" y="207" width="2.0" height="1" fill="#6a9955" opacity="0.75"/><rect x="1460.1" y="207" width="4.0" height="1" fill="#6a9955" opacity="0.75"/><rect x="1465.1" y="207" width="4.0" height="1" fill="#6a9955" opacity="0.75"/><rect x="1470.1" y="207" width="3.0" height="1" fill="#6a9955" opacity="0.75"/><rect x="1474.1" y="207" width="1.0" height="1" fill="#6a9955" opacity="0.75"/><rect x="1476.1" y="207" width="2.0" height="1" fill="#6a9955" opacity="0.75"/><rect x="1453.1" y="209" width="1.0" height="1" fill="#c8c8c8" opacity="0.60"/><rect x="1453.1" y="213" width="6.0" height="1" fill="#569cd6" opacity="0.75"/><rect x="1460.1" y="213" width="4.0" height="1" fill="#569cd6" opacity="0.75"/><rect x="1465.1" y="213" width="16.0" height="1" fill="#569cd6" opacity="0.75"/><rect x="1453.1" y="215" width="1.0" height="1" fill="#c8c8c8" opacity="0.60"/><rect x="1457.1" y="217" width="36.0" height="1" fill="#ff3030" opacity="0.95"/><rect x="1495.1" y="217" width="25.0" height="1" fill="#ff3030" opacity="0.95"/><rect x="1522.1" y="217" width="23.0" height="1" fill="#ff3030" opacity="0.95"/><rect x="1547.1" y="217" width="17.9" height="1" fill="#ff3030" opacity="0.95"/><rect x="1457.1" y="219" width="57.0" height="1" fill="#ff3030" opacity="0.95"/><rect x="1516.1" y="219" width="32.0" height="1" fill="#ff3030" opacity="0.95"/><rect x="1457.1" y="221" width="64.0" height="1" fill="#ff3030" opacity="0.95"/><rect x="1457.1" y="223" width="17.0" height="1" fill="#ff3030" opacity="0.95"/><rect x="1453.1" y="227" width="1.0" height="1" fill="#c8c8c8" opacity="0.60"/><rect x="1453.1" y="231" width="2.0" height="1" fill="#6a9955" opacity="0.75"/><rect x="1456.1" y="231" width="4.0" height="1" fill="#6a9955" opacity="0.75"/><rect x="1461.1" y="231" width="4.0" height="1" fill="#6a9955" opacity="0.75"/><rect x="1466.1" y="231" width="5.0" height="1" fill="#6a9955" opacity="0.75"/><rect x="1472.1" y="231" width="1.0" height="1" fill="#6a9955" opacity="0.75"/><rect x="1474.1" y="231" width="2.0" height="1" fill="#6a9955" opacity="0.75"/><rect x="1453.1" y="233" width="2.0" height="1" fill="#6a9955" opacity="0.75"/><rect x="1456.1" y="233" width="4.0" height="1" fill="#6a9955" opacity="0.75"/><rect x="1461.1" y="233" width="4.0" height="1" fill="#6a9955" opacity="0.75"/><rect x="1466.1" y="233" width="3.0" height="1" fill="#6a9955" opacity="0.75"/><rect x="1470.1" y="233" width="1.0" height="1" fill="#6a9955" opacity="0.75"/><rect x="1472.1" y="233" width="2.0" height="1" fill="#6a9955" opacity="0.75"/></svg>
<div class="b" style="left:1438px;top:75px;width:7px;height:552px;background:linear-gradient(90deg,rgba(0,0,0,0),rgba(0,0,0,0.6));"></div>
<div class="b" style="left:1565px;top:75px;width:1px;height:552px;background:#171717;"></div>
<div class="b" style="left:1566px;top:404px;width:20px;height:107px;background:rgba(121,121,121,0.4);"></div>
<div class="b" style="left:1566px;top:479px;width:20px;height:3px;background:#a0a0a0;"></div>
<div class="b" style="left:1580px;top:75.6px;width:6px;height:7.400000000000006px;background:#c42b2b;opacity:0.85;"></div>
<div class="b" style="left:1580px;top:167px;width:6px;height:8px;background:#c42b2b;opacity:0.85;"></div>
<div class="b" style="left:1580px;top:423px;width:6px;height:7.5px;background:#c42b2b;opacity:0.85;"></div>
<div class="b" style="left:1580px;top:469px;width:6px;height:22px;background:#c42b2b;opacity:0.85;"></div>
<div class="b" style="left:0px;top:627px;width:1586px;height:662px;background:#181818;"></div>
<div class="b" style="left:0px;top:627px;width:1586px;height:1px;background:#2b2b2b;"></div>
<span id="f77" class="t" style="left:27.00px;top:645.56px;font-family:'Liberation Sans', sans-serif;font-size:16.5px;line-height:21.45px;color:#e7e7e7;transform:scaleX(1.0303);"><i class="cj">问</i><i class="cj">题</i></span>
<div class="b" style="left:66px;top:642px;width:31.5px;height:24px;background:#0078d4;border-radius:12px;"></div>
<span id="f78" class="t" style="left:72.50px;top:644.06px;font-family:'Liberation Sans', sans-serif;font-size:16.5px;line-height:21.45px;color:#ffffff;transform:scaleX(0.9804);">16</span>
<div class="b" style="left:24px;top:669.5px;width:73px;height:1.5px;background:#0078d4;"></div>
<span id="f79" class="t" style="left:130.00px;top:645.56px;font-family:'Liberation Sans', sans-serif;font-size:16.5px;line-height:21.45px;color:#9d9d9d;transform:scaleX(1.0152);"><i class="cj">输</i><i class="cj">出</i></span>
<span id="f80" class="t" style="left:199.40px;top:645.56px;font-family:'Liberation Sans', sans-serif;font-size:16.5px;line-height:21.45px;color:#9d9d9d;transform:scaleX(1.0061);"><i class="cj">调</i><i class="cj">试</i><i class="cj">控</i><i class="cj">制</i><i class="cj">台</i></span>
<span id="f81" class="t" style="left:317.70px;top:645.56px;font-family:'Liberation Sans', sans-serif;font-size:16.5px;line-height:21.45px;color:#9d9d9d;transform:scaleX(1.0242);"><i class="cj">终</i><i class="cj">端</i></span>
<span id="f82" class="t" style="left:386.70px;top:645.56px;font-family:'Liberation Sans', sans-serif;font-size:16.5px;line-height:21.45px;color:#9d9d9d;transform:scaleX(1.0091);"><i class="cj">端</i><i class="cj">口</i></span>
<span id="f83" class="t" style="left:456.00px;top:645.26px;font-family:'Liberation Sans', sans-serif;font-size:16.5px;line-height:21.45px;color:#9d9d9d;transform:scaleX(0.9357);">MEMORY</span>
<span id="f84" class="t" style="left:561.00px;top:645.26px;font-family:'Liberation Sans', sans-serif;font-size:16.5px;line-height:21.45px;color:#9d9d9d;transform:scaleX(0.8409);">XRTOS</span>
<div class="b" style="left:1092px;top:636px;width:299.5px;height:35.5px;background:#2a2a2a;border-radius:6px;"></div>
<span id="f85" class="t" style="left:1102.00px;top:643.57px;font-family:'Liberation Sans', sans-serif;font-size:19.5px;line-height:25.35px;color:#8f8f8f;transform:scaleX(0.9266);"><i class="cj">筛</i><i class="cj">选</i><i class="cj">器</i>(<i class="cj">例</i><i class="cj">如</i> text<i class="cj">、</i>**/*.ts<i class="cj">、</i>!**...</span>
<svg class="b" style="left:1358px;top:642px" width="26" height="23" viewBox="0 0 26 23" fill="none" stroke="#cccccc" stroke-width="1.7" stroke-linejoin="round">
<path d="M2 2.5H24L16 11.5V20.5H10V11.5Z"/></svg>
<svg class="b" style="left:1402px;top:642px" width="25" height="24" viewBox="0 0 25 24" fill="none" stroke="#cccccc" stroke-width="1.7">
<rect x="2" y="2" width="17" height="17" rx="3"/><path d="M6.5 10.5H14.5"/><path d="M22.5 6V19A4 4 0 0 1 18.5 23H6"/></svg>
<svg class="b" style="left:1443px;top:644px" width="22" height="19" viewBox="0 0 22 19" fill="none" stroke="#cccccc" stroke-width="1.7">
<path d="M1 2.5H15M1 7.3H20M1 12H13M1 16.8H16"/></svg>
<div class="b" style="left:1482px;top:642px;width:1.6px;height:23.5px;background:#6a6a6a;"></div>
<svg class="b" style="left:1502px;top:644px" width="21" height="20" viewBox="0 0 21 20" fill="none" stroke="#cccccc" stroke-width="1.7">
<path d="M1 6V3A2 2 0 0 1 3 1H6M15 1H18A2 2 0 0 1 20 3V6M20 14V17A2 2 0 0 1 18 19H15M6 19H3A2 2 0 0 1 1 17V14"/></svg>
<svg class="b" style="left:1543px;top:646px" width="16" height="16" viewBox="0 0 16 16" fill="none" stroke="#cccccc" stroke-width="1.7">
<path d="M1 1L15 15M15 1L1 15"/></svg>
<svg class="b" style="left:17px;top:691px" width="18" height="12" viewBox="0 0 18 12"><path d="M1.5 2.5L9 10L16.5 2.5" stroke="#cccccc" stroke-width="1.6" fill="none"/></svg>
<svg class="b" style="left:46.4px;top:685.3px" width="20.200000000000003" height="22.800000000000068" viewBox="46.4 685.3 20.200000000000003 22.800000000000068"><path d="M61.10 692.91A5.21 5.90 0 1 0 61.10 700.49" stroke="#519aba" stroke-width="3.0" fill="none" stroke-linecap="butt"/></svg>
<span id="f86" class="t" style="left:75.20px;top:684.67px;font-family:'Liberation Sans', sans-serif;font-size:19.5px;line-height:25.35px;color:#cccccc;transform:scaleX(0.9576);">main.c</span>
<span id="f87" class="t" style="left:140.00px;top:684.67px;font-family:'Liberation Sans', sans-serif;font-size:19.5px;line-height:25.35px;color:#9d9d9d;transform:scaleX(0.8910);">app</span>
<div class="b" style="left:183.8px;top:684.8px;width:33px;height:27px;background:#616161;border-radius:14px;"></div>
<span id="f88" class="t" style="left:191.50px;top:686.16px;font-family:'Liberation Sans', sans-serif;font-size:18px;line-height:23.4px;color:#ffffff;transform:scaleX(0.8986);">16</span>
<svg class="b" style="left:64px;top:718.5px" width="23" height="23" viewBox="0 0 23 23" fill="none" stroke="#f14c4c" stroke-width="1.7"><circle cx="11.5" cy="11.5" r="9.8"/><path d="M7.5 7.5L15.5 15.5M15.5 7.5L7.5 15.5"/></svg>
<span id="f89" class="t" style="left:96.20px;top:717.67px;font-family:'Liberation Sans', sans-serif;font-size:19.5px;line-height:25.35px;color:#cccccc;transform:scaleX(1.0083);">Too many errors emitted, stopping now</span>
<span id="f90" class="t" style="left:444.70px;top:717.67px;font-family:'Liberation Sans', sans-serif;font-size:19.5px;line-height:25.35px;color:#9d9d9d;transform:scaleX(0.9630);">clang(fatal_too_many_errors)</span>
<span id="f91" class="t" style="left:700.00px;top:717.67px;font-family:'Liberation Sans', sans-serif;font-size:19.5px;line-height:25.35px;color:#9d9d9d;transform:scaleX(0.9865);">[<i class="cj">行</i> 1<i class="cj cm">,</i><i class="cj">列</i> 1]</span>
<svg class="b" style="left:64px;top:751.5px" width="23" height="23" viewBox="0 0 23 23" fill="none" stroke="#f14c4c" stroke-width="1.7"><circle cx="11.5" cy="11.5" r="9.8"/><path d="M7.5 7.5L15.5 15.5M15.5 7.5L7.5 15.5"/></svg>
<span id="f92" class="t" style="left:96.20px;top:750.67px;font-family:'Liberation Sans', sans-serif;font-size:19.5px;line-height:25.35px;color:#cccccc;transform:scaleX(1.0057);">In included file: expected identifier or '('</span>
<span id="f93" class="t" style="left:445.00px;top:750.67px;font-family:'Liberation Sans', sans-serif;font-size:19.5px;line-height:25.35px;color:#9d9d9d;transform:scaleX(0.9729);">clang(expected_either)</span>
<span id="f94" class="t" style="left:648.70px;top:750.67px;font-family:'Liberation Sans', sans-serif;font-size:19.5px;line-height:25.35px;color:#9d9d9d;transform:scaleX(0.9793);">[<i class="cj">行</i> 18<i class="cj cm">,</i><i class="cj">列</i> 10]</span>
<svg class="b" style="left:64px;top:817.5px" width="23" height="23" viewBox="0 0 23 23" fill="none" stroke="#f14c4c" stroke-width="1.7"><circle cx="11.5" cy="11.5" r="9.8"/><path d="M7.5 7.5L15.5 15.5M15.5 7.5L7.5 15.5"/></svg>
<span id="f95" class="t" style="left:96.20px;top:816.67px;font-family:'Liberation Sans', sans-serif;font-size:19.5px;line-height:25.35px;color:#cccccc;transform:scaleX(1.0126);">Call to undeclared function </span>
<span id="f96" class="t" style="left:335.50px;top:816.67px;font-family:'Liberation Sans', sans-serif;font-size:19.5px;line-height:25.35px;color:#cccccc;transform:scaleX(0.9254);">'BSP_GPIO_OutToggle'; </span>
<span id="f97" class="t" style="left:536.00px;top:816.67px;font-family:'Liberation Sans', sans-serif;font-size:19.5px;line-height:25.35px;color:#cccccc;transform:scaleX(1.0038);">ISO C99 and later do not support implicit function declarations</span>
<span id="f98" class="t" style="left:1082.80px;top:816.67px;font-family:'Liberation Sans', sans-serif;font-size:19.5px;line-height:25.35px;color:#9d9d9d;transform:scaleX(1.0231);">clang(-Wimplicit-function-declaration)</span>
<span id="f99" class="t" style="left:1422.00px;top:816.67px;font-family:'Liberation Sans', sans-serif;font-size:19.5px;line-height:25.35px;color:#9d9d9d;transform:scaleX(0.9830);">[<i class="cj">行</i> 64<i class="cj cm">,</i><i class="cj">列</i> 9]</span>
<svg class="b" style="left:64px;top:850.5px" width="23" height="23" viewBox="0 0 23 23" fill="none" stroke="#f14c4c" stroke-width="1.7"><circle cx="11.5" cy="11.5" r="9.8"/><path d="M7.5 7.5L15.5 15.5M15.5 7.5L7.5 15.5"/></svg>
<span id="f100" class="t" style="left:96.20px;top:849.67px;font-family:'Liberation Sans', sans-serif;font-size:19.5px;line-height:25.35px;color:#cccccc;transform:scaleX(1.0020);">Use of undeclared identifier </span>
<span id="f101" class="t" style="left:339.50px;top:849.67px;font-family:'Liberation Sans', sans-serif;font-size:19.5px;line-height:25.35px;color:#cccccc;transform:scaleX(0.8599);">'LDE_PIN'</span>
<span id="f102" class="t" style="left:428.50px;top:849.67px;font-family:'Liberation Sans', sans-serif;font-size:19.5px;line-height:25.35px;color:#9d9d9d;transform:scaleX(0.9500);">clang(undeclared_var_use)</span>
<span id="f103" class="t" style="left:664.20px;top:849.67px;font-family:'Liberation Sans', sans-serif;font-size:19.5px;line-height:25.35px;color:#9d9d9d;transform:scaleX(0.9776);">[<i class="cj">行</i> 64<i class="cj cm">,</i><i class="cj">列</i> 28]</span>
<svg class="b" style="left:64px;top:883.5px" width="23" height="23" viewBox="0 0 23 23" fill="none" stroke="#f14c4c" stroke-width="1.7"><circle cx="11.5" cy="11.5" r="9.8"/><path d="M7.5 7.5L15.5 15.5M15.5 7.5L7.5 15.5"/></svg>
<span id="f104" class="t" style="left:96.20px;top:882.67px;font-family:'Liberation Sans', sans-serif;font-size:19.5px;line-height:25.35px;color:#cccccc;transform:scaleX(1.0126);">Call to undeclared function </span>
<span id="f105" class="t" style="left:335.50px;top:882.67px;font-family:'Liberation Sans', sans-serif;font-size:19.5px;line-height:25.35px;color:#cccccc;transform:scaleX(0.8822);">'CLOCK_SYS_Init'; </span>
<span id="f106" class="t" style="left:487.40px;top:882.67px;font-family:'Liberation Sans', sans-serif;font-size:19.5px;line-height:25.35px;color:#cccccc;transform:scaleX(0.9992);">ISO C99 and later do not support implicit function declarations (fix av...</span>
<span id="f107" class="t" style="left:1111.00px;top:882.67px;font-family:'Liberation Sans', sans-serif;font-size:19.5px;line-height:25.35px;color:#9d9d9d;transform:scaleX(1.0238);">clang(-Wimplicit-function-declaration)</span>
<span id="f108" class="t" style="left:1449.50px;top:882.67px;font-family:'Liberation Sans', sans-serif;font-size:19.5px;line-height:25.35px;color:#9d9d9d;transform:scaleX(0.9830);">[<i class="cj">行</i> 72<i class="cj cm">,</i><i class="cj">列</i> 5]</span>
<svg class="b" style="left:64px;top:916.5px" width="23" height="23" viewBox="0 0 23 23" fill="none" stroke="#f14c4c" stroke-width="1.7"><circle cx="11.5" cy="11.5" r="9.8"/><path d="M7.5 7.5L15.5 15.5M15.5 7.5L7.5 15.5"/></svg>
<span id="f109" class="t" style="left:96.20px;top:915.67px;font-family:'Liberation Sans', sans-serif;font-size:19.5px;line-height:25.35px;color:#cccccc;transform:scaleX(1.0020);">Use of undeclared identifier </span>
<span id="f110" class="t" style="left:339.50px;top:915.67px;font-family:'Liberation Sans', sans-serif;font-size:19.5px;line-height:25.35px;color:#cccccc;transform:scaleX(0.9833);">'g_clockManConfigsArr' (fix available)</span>
<span id="f111" class="t" style="left:667.60px;top:915.67px;font-family:'Liberation Sans', sans-serif;font-size:19.5px;line-height:25.35px;color:#9d9d9d;transform:scaleX(0.9538);">clang(undeclared_var_use)</span>
<span id="f112" class="t" style="left:902.70px;top:915.67px;font-family:'Liberation Sans', sans-serif;font-size:19.5px;line-height:25.35px;color:#9d9d9d;transform:scaleX(0.9817);">[<i class="cj">行</i> 72<i class="cj cm">,</i><i class="cj">列</i> 20]</span>
<svg class="b" style="left:64px;top:949.5px" width="23" height="23" viewBox="0 0 23 23" fill="none" stroke="#f14c4c" stroke-width="1.7"><circle cx="11.5" cy="11.5" r="9.8"/><path d="M7.5 7.5L15.5 15.5M15.5 7.5L7.5 15.5"/></svg>
<span id="f113" class="t" style="left:96.20px;top:948.67px;font-family:'Liberation Sans', sans-serif;font-size:19.5px;line-height:25.35px;color:#cccccc;transform:scaleX(1.0020);">Use of undeclared identifier </span>
<span id="f114" class="t" style="left:339.50px;top:948.67px;font-family:'Liberation Sans', sans-serif;font-size:19.5px;line-height:25.35px;color:#cccccc;transform:scaleX(0.8959);">'CLOCK_MANAGER_CONFIG_CNT'</span>
<span id="f115" class="t" style="left:638.50px;top:948.67px;font-family:'Liberation Sans', sans-serif;font-size:19.5px;line-height:25.35px;color:#9d9d9d;transform:scaleX(0.9491);">clang(undeclared_var_use)</span>
<span id="f116" class="t" style="left:873.00px;top:948.67px;font-family:'Liberation Sans', sans-serif;font-size:19.5px;line-height:25.35px;color:#9d9d9d;transform:scaleX(0.9793);">[<i class="cj">行</i> 72<i class="cj cm">,</i><i class="cj">列</i> 41]</span>
<svg class="b" style="left:64px;top:982.5px" width="23" height="23" viewBox="0 0 23 23" fill="none" stroke="#f14c4c" stroke-width="1.7"><circle cx="11.5" cy="11.5" r="9.8"/><path d="M7.5 7.5L15.5 15.5M15.5 7.5L7.5 15.5"/></svg>
<span id="f117" class="t" style="left:96.20px;top:981.67px;font-family:'Liberation Sans', sans-serif;font-size:19.5px;line-height:25.35px;color:#cccccc;transform:scaleX(1.0020);">Use of undeclared identifier </span>
<span id="f118" class="t" style="left:339.50px;top:981.67px;font-family:'Liberation Sans', sans-serif;font-size:19.5px;line-height:25.35px;color:#cccccc;transform:scaleX(0.9751);">'g_clockManCallbacksArr'</span>
<span id="f119" class="t" style="left:566.00px;top:981.67px;font-family:'Liberation Sans', sans-serif;font-size:19.5px;line-height:25.35px;color:#9d9d9d;transform:scaleX(0.9478);">clang(undeclared_var_use)</span>
<span id="f120" class="t" style="left:800.20px;top:981.67px;font-family:'Liberation Sans', sans-serif;font-size:19.5px;line-height:25.35px;color:#9d9d9d;transform:scaleX(0.9801);">[<i class="cj">行</i> 72<i class="cj cm">,</i><i class="cj">列</i> 66]</span>
<svg class="b" style="left:64px;top:1015.5px" width="23" height="23" viewBox="0 0 23 23" fill="none" stroke="#f14c4c" stroke-width="1.7"><circle cx="11.5" cy="11.5" r="9.8"/><path d="M7.5 7.5L15.5 15.5M15.5 7.5L7.5 15.5"/></svg>
<span id="f121" class="t" style="left:96.20px;top:1014.67px;font-family:'Liberation Sans', sans-serif;font-size:19.5px;line-height:25.35px;color:#cccccc;transform:scaleX(1.0020);">Use of undeclared identifier </span>
<span id="f122" class="t" style="left:339.50px;top:1014.67px;font-family:'Liberation Sans', sans-serif;font-size:19.5px;line-height:25.35px;color:#cccccc;transform:scaleX(0.8872);">'CLOCK_MANAGER_CALLBACK_CNT'</span>
<span id="f123" class="t" style="left:658.60px;top:1014.67px;font-family:'Liberation Sans', sans-serif;font-size:19.5px;line-height:25.35px;color:#9d9d9d;transform:scaleX(0.9495);">clang(undeclared_var_use)</span>
<span id="f124" class="t" style="left:893.50px;top:1014.67px;font-family:'Liberation Sans', sans-serif;font-size:19.5px;line-height:25.35px;color:#9d9d9d;transform:scaleX(0.9785);">[<i class="cj">行</i> 72<i class="cj cm">,</i><i class="cj">列</i> 89]</span>
<svg class="b" style="left:64px;top:1048.5px" width="23" height="23" viewBox="0 0 23 23" fill="none" stroke="#f14c4c" stroke-width="1.7"><circle cx="11.5" cy="11.5" r="9.8"/><path d="M7.5 7.5L15.5 15.5M15.5 7.5L7.5 15.5"/></svg>
<span id="f125" class="t" style="left:96.20px;top:1047.67px;font-family:'Liberation Sans', sans-serif;font-size:19.5px;line-height:25.35px;color:#cccccc;transform:scaleX(1.0126);">Call to undeclared function </span>
<span id="f126" class="t" style="left:335.50px;top:1047.67px;font-family:'Liberation Sans', sans-serif;font-size:19.5px;line-height:25.35px;color:#cccccc;transform:scaleX(0.9392);">'CLOCK_SYS_UpdateConfiguration'; </span>
<span id="f127" class="t" style="left:640.80px;top:1047.67px;font-family:'Liberation Sans', sans-serif;font-size:19.5px;line-height:25.35px;color:#cccccc;transform:scaleX(1.0039);">ISO C99 and later do not support implicit function d...</span>
<span id="f128" class="t" style="left:1111.30px;top:1047.67px;font-family:'Liberation Sans', sans-serif;font-size:19.5px;line-height:25.35px;color:#9d9d9d;transform:scaleX(1.0209);">clang(-Wimplicit-function-declaration)</span>
<span id="f129" class="t" style="left:1450.00px;top:1047.67px;font-family:'Liberation Sans', sans-serif;font-size:19.5px;line-height:25.35px;color:#9d9d9d;transform:scaleX(0.9759);">[<i class="cj">行</i> 73<i class="cj cm">,</i><i class="cj">列</i> 5]</span>
<svg class="b" style="left:64px;top:1081.5px" width="23" height="23" viewBox="0 0 23 23" fill="none" stroke="#f14c4c" stroke-width="1.7"><circle cx="11.5" cy="11.5" r="9.8"/><path d="M7.5 7.5L15.5 15.5M15.5 7.5L7.5 15.5"/></svg>
<span id="f130" class="t" style="left:96.20px;top:1080.67px;font-family:'Liberation Sans', sans-serif;font-size:19.5px;line-height:25.35px;color:#cccccc;transform:scaleX(1.0020);">Use of undeclared identifier </span>
<span id="f131" class="t" style="left:339.50px;top:1080.67px;font-family:'Liberation Sans', sans-serif;font-size:19.5px;line-height:25.35px;color:#cccccc;transform:scaleX(0.8895);">'CLOCK_MANAGER_ACTIVE_INDEX'</span>
<span id="f132" class="t" style="left:648.80px;top:1080.67px;font-family:'Liberation Sans', sans-serif;font-size:19.5px;line-height:25.35px;color:#9d9d9d;transform:scaleX(0.9500);">clang(undeclared_var_use)</span>
<span id="f133" class="t" style="left:884.00px;top:1080.67px;font-family:'Liberation Sans', sans-serif;font-size:19.5px;line-height:25.35px;color:#9d9d9d;transform:scaleX(0.9793);">[<i class="cj">行</i> 73<i class="cj cm">,</i><i class="cj">列</i> 35]</span>
<svg class="b" style="left:64px;top:1114.5px" width="23" height="23" viewBox="0 0 23 23" fill="none" stroke="#f14c4c" stroke-width="1.7"><circle cx="11.5" cy="11.5" r="9.8"/><path d="M7.5 7.5L15.5 15.5M15.5 7.5L7.5 15.5"/></svg>
<span id="f134" class="t" style="left:96.20px;top:1113.67px;font-family:'Liberation Sans', sans-serif;font-size:19.5px;line-height:25.35px;color:#cccccc;transform:scaleX(1.0020);">Use of undeclared identifier </span>
<span id="f135" class="t" style="left:339.50px;top:1113.67px;font-family:'Liberation Sans', sans-serif;font-size:19.5px;line-height:25.35px;color:#cccccc;transform:scaleX(0.8837);">'CLOCK_MANAGER_POLICY_AGREEMENT'</span>
<span id="f136" class="t" style="left:704.20px;top:1113.67px;font-family:'Liberation Sans', sans-serif;font-size:19.5px;line-height:25.35px;color:#9d9d9d;transform:scaleX(0.9500);">clang(undeclared_var_use)</span>
<span id="f137" class="t" style="left:939.00px;top:1113.67px;font-family:'Liberation Sans', sans-serif;font-size:19.5px;line-height:25.35px;color:#9d9d9d;transform:scaleX(0.9793);">[<i class="cj">行</i> 73<i class="cj cm">,</i><i class="cj">列</i> 62]</span>
<svg class="b" style="left:64px;top:1147.5px" width="23" height="23" viewBox="0 0 23 23" fill="none" stroke="#f14c4c" stroke-width="1.7"><circle cx="11.5" cy="11.5" r="9.8"/><path d="M7.5 7.5L15.5 15.5M15.5 7.5L7.5 15.5"/></svg>
<span id="f138" class="t" style="left:96.20px;top:1146.67px;font-family:'Liberation Sans', sans-serif;font-size:19.5px;line-height:25.35px;color:#cccccc;transform:scaleX(1.0126);">Call to undeclared function </span>
<span id="f139" class="t" style="left:335.50px;top:1146.67px;font-family:'Liberation Sans', sans-serif;font-size:19.5px;line-height:25.35px;color:#cccccc;transform:scaleX(0.9158);">'PINS_DRV_Init'; </span>
<span id="f140" class="t" style="left:475.00px;top:1146.67px;font-family:'Liberation Sans', sans-serif;font-size:19.5px;line-height:25.35px;color:#cccccc;transform:scaleX(1.0047);">ISO C99 and later do not support implicit function declarations</span>
<span id="f141" class="t" style="left:1022.40px;top:1146.67px;font-family:'Liberation Sans', sans-serif;font-size:19.5px;line-height:25.35px;color:#9d9d9d;transform:scaleX(1.0244);">clang(-Wimplicit-function-declaration)</span>
<span id="f142" class="t" style="left:1361.50px;top:1146.67px;font-family:'Liberation Sans', sans-serif;font-size:19.5px;line-height:25.35px;color:#9d9d9d;transform:scaleX(0.9839);">[<i class="cj">行</i> 74<i class="cj cm">,</i><i class="cj">列</i> 5]</span>
<svg class="b" style="left:64px;top:1180.5px" width="23" height="23" viewBox="0 0 23 23" fill="none" stroke="#f14c4c" stroke-width="1.7"><circle cx="11.5" cy="11.5" r="9.8"/><path d="M7.5 7.5L15.5 15.5M15.5 7.5L7.5 15.5"/></svg>
<span id="f143" class="t" style="left:96.20px;top:1179.67px;font-family:'Liberation Sans', sans-serif;font-size:19.5px;line-height:25.35px;color:#cccccc;transform:scaleX(1.0020);">Use of undeclared identifier </span>
<span id="f144" class="t" style="left:339.50px;top:1179.67px;font-family:'Liberation Sans', sans-serif;font-size:19.5px;line-height:25.35px;color:#cccccc;transform:scaleX(0.9049);">'NUM_OF_CONFIGURED_PINS0'</span>
<span id="f145" class="t" style="left:620.70px;top:1179.67px;font-family:'Liberation Sans', sans-serif;font-size:19.5px;line-height:25.35px;color:#9d9d9d;transform:scaleX(0.9500);">clang(undeclared_var_use)</span>
<span id="f146" class="t" style="left:856.00px;top:1179.67px;font-family:'Liberation Sans', sans-serif;font-size:19.5px;line-height:25.35px;color:#9d9d9d;transform:scaleX(0.9776);">[<i class="cj">行</i> 74<i class="cj cm">,</i><i class="cj">列</i> 19]</span>
<svg class="b" style="left:64px;top:1213.5px" width="23" height="23" viewBox="0 0 23 23" fill="none" stroke="#f14c4c" stroke-width="1.7"><circle cx="11.5" cy="11.5" r="9.8"/><path d="M7.5 7.5L15.5 15.5M15.5 7.5L7.5 15.5"/></svg>
<span id="f147" class="t" style="left:96.20px;top:1212.67px;font-family:'Liberation Sans', sans-serif;font-size:19.5px;line-height:25.35px;color:#cccccc;transform:scaleX(1.0020);">Use of undeclared identifier </span>
<span id="f148" class="t" style="left:339.50px;top:1212.67px;font-family:'Liberation Sans', sans-serif;font-size:19.5px;line-height:25.35px;color:#cccccc;transform:scaleX(0.9811);">'g_pin_mux_InitConfigArr0'</span>
<span id="f149" class="t" style="left:578.00px;top:1212.67px;font-family:'Liberation Sans', sans-serif;font-size:19.5px;line-height:25.35px;color:#9d9d9d;transform:scaleX(0.9500);">clang(undeclared_var_use)</span>
<span id="f150" class="t" style="left:814.00px;top:1212.67px;font-family:'Liberation Sans', sans-serif;font-size:19.5px;line-height:25.35px;color:#9d9d9d;transform:scaleX(0.9768);">[<i class="cj">行</i> 74<i class="cj cm">,</i><i class="cj">列</i> 43]</span>
<svg class="b" style="left:64px;top:1246.5px" width="23" height="23" viewBox="0 0 23 23" fill="none" stroke="#f14c4c" stroke-width="1.7"><circle cx="11.5" cy="11.5" r="9.8"/><path d="M7.5 7.5L15.5 15.5M15.5 7.5L7.5 15.5"/></svg>
<span id="f151" class="t" style="left:96.20px;top:1245.67px;font-family:'Liberation Sans', sans-serif;font-size:19.5px;line-height:25.35px;color:#cccccc;transform:scaleX(1.0126);">Call to undeclared function </span>
<span id="f152" class="t" style="left:335.50px;top:1245.67px;font-family:'Liberation Sans', sans-serif;font-size:19.5px;line-height:25.35px;color:#cccccc;transform:scaleX(0.9094);">'BSP_lpMER_Inlt'; </span>
<span id="f153" class="t" style="left:484.20px;top:1245.67px;font-family:'Liberation Sans', sans-serif;font-size:19.5px;line-height:25.35px;color:#cccccc;transform:scaleX(1.0032);">ISO C99 and later do not support implicit function declarations</span>
<span id="f154" class="t" style="left:1031.70px;top:1245.67px;font-family:'Liberation Sans', sans-serif;font-size:19.5px;line-height:25.35px;color:#9d9d9d;transform:scaleX(1.0244);">clang(-Wimplicit-function-declaration)</span>
<span id="f155" class="t" style="left:1370.80px;top:1245.67px;font-family:'Liberation Sans', sans-serif;font-size:19.5px;line-height:25.35px;color:#9d9d9d;transform:scaleX(0.9839);">[<i class="cj">行</i> 75<i class="cj cm">,</i><i class="cj">列</i> 5]</span>
<svg class="b" style="left:29px;top:757px" width="18" height="12" viewBox="0 0 18 12"><path d="M1.5 2.5L9 10L16.5 2.5" stroke="#cccccc" stroke-width="1.6" fill="none"/></svg>
<span id="f156" class="t" style="left:66.00px;top:783.67px;font-family:'Liberation Sans', sans-serif;font-size:19.5px;line-height:25.35px;color:#9d9d9d;transform:scaleX(0.9416);">Task.h[<i class="cj">行</i> 1<i class="cj cm">,</i><i class="cj">列</i> 1]</span>
<span id="f157" class="t" style="left:216.00px;top:783.67px;font-family:'Liberation Sans', sans-serif;font-size:19.5px;line-height:25.35px;color:#cccccc;transform:scaleX(1.0005);">: Error occurred here</span>
<div class="b" style="left:0px;top:1272px;width:1596px;height:17px;background:#181818;"></div>
<div class="b" style="left:0px;top:1271px;width:1596px;height:2px;background:#2b2b2b;"></div>
<span id="f158" class="t" style="left:1457.70px;top:1275.57px;font-family:'Liberation Sans', sans-serif;font-size:19.5px;line-height:25.35px;color:#cccccc;transform:scaleX(0.8960);"><i class="cj">行</i> 74<i class="cj cm">,</i><i class="cj">列</i> 53</span>
<span id="f159" class="t" style="left:1584.00px;top:1275.57px;font-family:'Liberation Sans', sans-serif;font-size:19.5px;line-height:25.35px;color:#cccccc;"><i class="cj">空</i><i class="cj">格</i>: 4</span>
<div class="b" style="left:1586px;top:0px;width:10px;height:1271px;background:#1b1b1b;"></div>
<div class="b" style="left:1586px;top:0px;width:1px;height:1271px;background:#2b2b2b;"></div>
</body></html>
